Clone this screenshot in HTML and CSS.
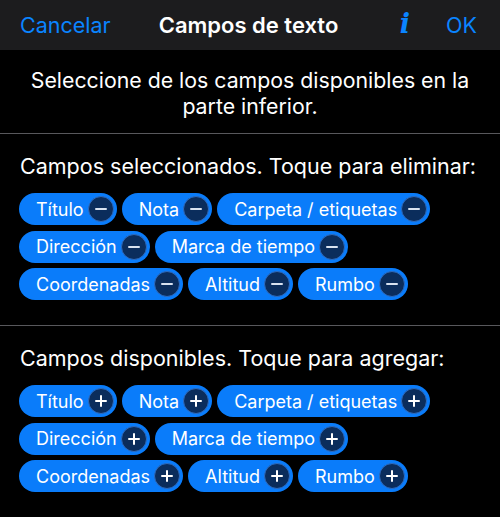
FILE: index.html
```html
<!DOCTYPE html>
<html lang="es">
<head>
<meta charset="utf-8">
<title>Campos de texto</title>
<link rel="stylesheet" href="styles.css">
</head>
<body>
<header class="navbar">
  <div class="nav-left"><span class="nav-btn">Cancelar</span></div>
  <div class="nav-title">Campos de texto</div>
  <div class="nav-right"><span class="info">i</span><span class="nav-btn">OK</span></div>
</header>
<p class="intro">Seleccione de los campos disponibles en la parte inferior.</p>
<section class="section first">
  <h2 class="heading">Campos seleccionados. Toque para eliminar:</h2>
  <div class="chips">
    <span class="chip">Título<span class="icon minus"></span></span>
    <span class="chip">Nota<span class="icon minus"></span></span>
    <span class="chip">Carpeta / etiquetas<span class="icon minus"></span></span>
    <span class="chip">Dirección<span class="icon minus"></span></span>
    <span class="chip">Marca de tiempo<span class="icon minus"></span></span>
    <span class="chip">Coordenadas<span class="icon minus"></span></span>
    <span class="chip">Altitud<span class="icon minus"></span></span>
    <span class="chip">Rumbo<span class="icon minus"></span></span>
  </div>
</section>
<section class="section second">
  <h2 class="heading">Campos disponibles. Toque para agregar:</h2>
  <div class="chips">
    <span class="chip">Título<span class="icon plus"></span></span>
    <span class="chip">Nota<span class="icon plus"></span></span>
    <span class="chip">Carpeta / etiquetas<span class="icon plus"></span></span>
    <span class="chip">Dirección<span class="icon plus"></span></span>
    <span class="chip">Marca de tiempo<span class="icon plus"></span></span>
    <span class="chip">Coordenadas<span class="icon plus"></span></span>
    <span class="chip">Altitud<span class="icon plus"></span></span>
    <span class="chip">Rumbo<span class="icon plus"></span></span>
  </div>
</section>
</body>
</html>
```
FILE: styles.css
```css
* { box-sizing: border-box; }
html, body { margin: 0; padding: 0; }
body {
  background: #000;
  color: #fff;
  font-family: Inter, "Noto Sans", "Liberation Sans", sans-serif;
  width: 500px;
  height: 517px;
  overflow: hidden;
}
.navbar {
  height: 50px;
  background: #1c1c1e;
  display: grid;
  grid-template-columns: 1fr auto 1fr;
  align-items: center;
  padding: 0 23px 0 20px;
}
.nav-btn {
  color: #0a84ff;
  font-size: 21.5px;
}
.nav-title {
  font-size: 22px;
  font-weight: 600;
}
.nav-right {
  display: flex;
  justify-content: flex-end;
  align-items: center;
  gap: 36px;
}
.info {
  color: #0a84ff;
  font-family: "DejaVu Serif", "Liberation Serif", serif;
  font-style: italic;
  font-weight: bold;
  font-size: 27px;
  line-height: 1;
  margin-top: -3px;
}
.intro {
  margin: 0;
  padding: 17px 20px 14px;
  text-align: center;
  font-size: 21.3px;
  line-height: 26px;
  border-bottom: 1.5px solid #58585c;
}
.section { padding: 0 19px; }
.section.first {
  padding-top: 19px;
  padding-bottom: 25px;
  border-bottom: 1.5px solid #58585c;
}
.section.second { padding-top: 19px; }
.heading {
  margin: 0 0 14px 1px;
  font-size: 21.5px;
  font-weight: 400;
  line-height: 26px;
  white-space: nowrap;
}
.chips {
  display: flex;
  flex-wrap: wrap;
  column-gap: 5px;
  row-gap: 5.5px;
}
.chip {
  height: 32px;
  display: inline-flex;
  align-items: center;
  gap: 4px;
  padding: 0 3px 0 17px;
  background: #0a7cfa;
  border-radius: 16px;
  font-size: 18px;
  color: #fff;
}
.icon {
  width: 26px;
  height: 26px;
  border-radius: 50%;
  background: #0b2d5c;
  border: 1px solid #2f6cc0;
  position: relative;
  flex: none;
}
.icon::before, .icon::after {
  content: "";
  position: absolute;
  background: #fff;
  border-radius: 1px;
  left: 50%;
  top: 50%;
}
.icon::before {
  width: 12px;
  height: 2px;
  margin: -1px 0 0 -6px;
}
.minus::after { display: none; }
.minus::before { background: #d8e2f0; }
.plus::after {
  width: 2px;
  height: 12px;
  margin: -6px 0 0 -1px;
}
```
